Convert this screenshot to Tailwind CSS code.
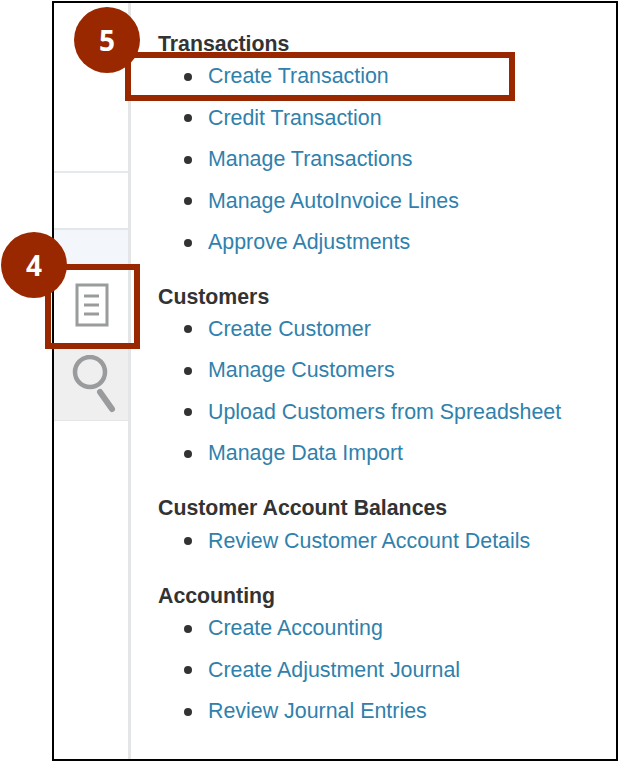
<!DOCTYPE html>
<html lang="en">
<head>
  <meta charset="UTF-8" />
  <title>Receivables tasks</title>
  <script src="https://cdn.jsdelivr.net/npm/@tailwindcss/browser@4"></script>
</head>
<body class="bg-white">
  <div class="relative w-[618px] h-[761px] overflow-hidden font-['Liberation_Sans',Arial,sans-serif]">
    <!-- Frame -->
    <div class="absolute left-[52px] top-[1px] w-[566px] h-[760px] border-[2px] border-black flex">
      <!-- Sidebar -->
      <div class="w-[74px] shrink-0 flex flex-col border-r-[3px] border-[#e3e5e6] box-content">
        <div class="h-[170px] border-b-2 border-[#e6e9ec]"></div>
        <div class="h-[57px] border-b-2 border-[#e2e7ec]"></div>
        <div class="h-[35px] bg-[#f3f7fc]"></div>
        <div class="h-[84px] flex items-start pl-[21px] pt-[18px]">
          <svg width="34" height="44" viewBox="0 0 34 44" fill="none" stroke="#999b9c" stroke-width="3">
            <rect x="2" y="2" width="30" height="40" />
            <path d="M9 13H24M9 22H24M9 31H24" />
          </svg>
        </div>
        <div class="h-[72px] bg-[#efefef] border-b border-[#e3e5e6] flex items-start pl-[18px] pt-[6px]">
          <svg width="44" height="58" viewBox="0 0 44 58" fill="none" stroke="#999b9c">
            <circle cx="18" cy="17" r="15" stroke-width="4.5" />
            <path d="M28 37L40 54" stroke-width="6" stroke-linecap="round" />
          </svg>
        </div>
      </div>
      <!-- Task list -->
      <div class="flex-1 pl-[27px] pt-[29px] text-[#333]">
        <h3 class="text-[21.3px] leading-[24px] font-bold">Transactions</h3>
        <ul class="text-[21.4px] leading-[41.5px] text-[#2f81ac] mb-[21px]">
          <li class="h-[41.5px] flex items-center"><span class="w-2 h-2 rounded-full bg-[#333] ml-[26px] mr-[16px]"></span>Create Transaction</li>
          <li class="h-[41.5px] flex items-center"><span class="w-2 h-2 rounded-full bg-[#333] ml-[26px] mr-[16px]"></span>Credit Transaction</li>
          <li class="h-[41.5px] flex items-center"><span class="w-2 h-2 rounded-full bg-[#333] ml-[26px] mr-[16px]"></span>Manage Transactions</li>
          <li class="h-[41.5px] flex items-center"><span class="w-2 h-2 rounded-full bg-[#333] ml-[26px] mr-[16px]"></span>Manage AutoInvoice Lines</li>
          <li class="h-[41.5px] flex items-center"><span class="w-2 h-2 rounded-full bg-[#333] ml-[26px] mr-[16px]"></span>Approve Adjustments</li>
        </ul>
        <h3 class="text-[21.3px] leading-[24px] font-bold">Customers</h3>
        <ul class="text-[21.4px] leading-[41.5px] text-[#2f81ac] mb-[21px]">
          <li class="h-[41.5px] flex items-center"><span class="w-2 h-2 rounded-full bg-[#333] ml-[26px] mr-[16px]"></span>Create Customer</li>
          <li class="h-[41.5px] flex items-center"><span class="w-2 h-2 rounded-full bg-[#333] ml-[26px] mr-[16px]"></span>Manage Customers</li>
          <li class="h-[41.5px] flex items-center"><span class="w-2 h-2 rounded-full bg-[#333] ml-[26px] mr-[16px]"></span>Upload Customers from Spreadsheet</li>
          <li class="h-[41.5px] flex items-center"><span class="w-2 h-2 rounded-full bg-[#333] ml-[26px] mr-[16px]"></span>Manage Data Import</li>
        </ul>
        <h3 class="text-[21.3px] leading-[24px] font-bold">Customer Account Balances</h3>
        <ul class="text-[21.4px] leading-[41.5px] text-[#2f81ac] mt-[1px] mb-[22px]">
          <li class="h-[41.5px] flex items-center"><span class="w-2 h-2 rounded-full bg-[#333] ml-[26px] mr-[16px]"></span>Review Customer Account Details</li>
        </ul>
        <h3 class="text-[21.3px] leading-[24px] font-bold">Accounting</h3>
        <ul class="text-[21.4px] leading-[41.5px] text-[#2f81ac]">
          <li class="h-[41.5px] flex items-center"><span class="w-2 h-2 rounded-full bg-[#333] ml-[26px] mr-[16px]"></span>Create Accounting</li>
          <li class="h-[41.5px] flex items-center"><span class="w-2 h-2 rounded-full bg-[#333] ml-[26px] mr-[16px]"></span>Create Adjustment Journal</li>
          <li class="h-[41.5px] flex items-center"><span class="w-2 h-2 rounded-full bg-[#333] ml-[26px] mr-[16px]"></span>Review Journal Entries</li>
        </ul>
      </div>
    </div>
    <!-- Callouts -->
    <div class="absolute left-[125px] top-[52px] w-[390px] h-[49px] border-[6px] border-[#992700]"></div>
    <div class="absolute left-[45px] top-[264px] w-[95px] h-[85px] border-[6px] border-[#992700]"></div>
    <div class="absolute left-[74px] top-[7px] w-[66px] h-[66px] rounded-full bg-[#992700] text-white flex items-center justify-center font-['Open_Sans',sans-serif] font-bold text-[28px]">5</div>
    <div class="absolute left-[1px] top-[232px] w-[66px] h-[66px] rounded-full bg-[#992700] text-white flex items-center justify-center font-['Open_Sans',sans-serif] font-bold text-[28px]">4</div>
  </div>
</body>
</html>
